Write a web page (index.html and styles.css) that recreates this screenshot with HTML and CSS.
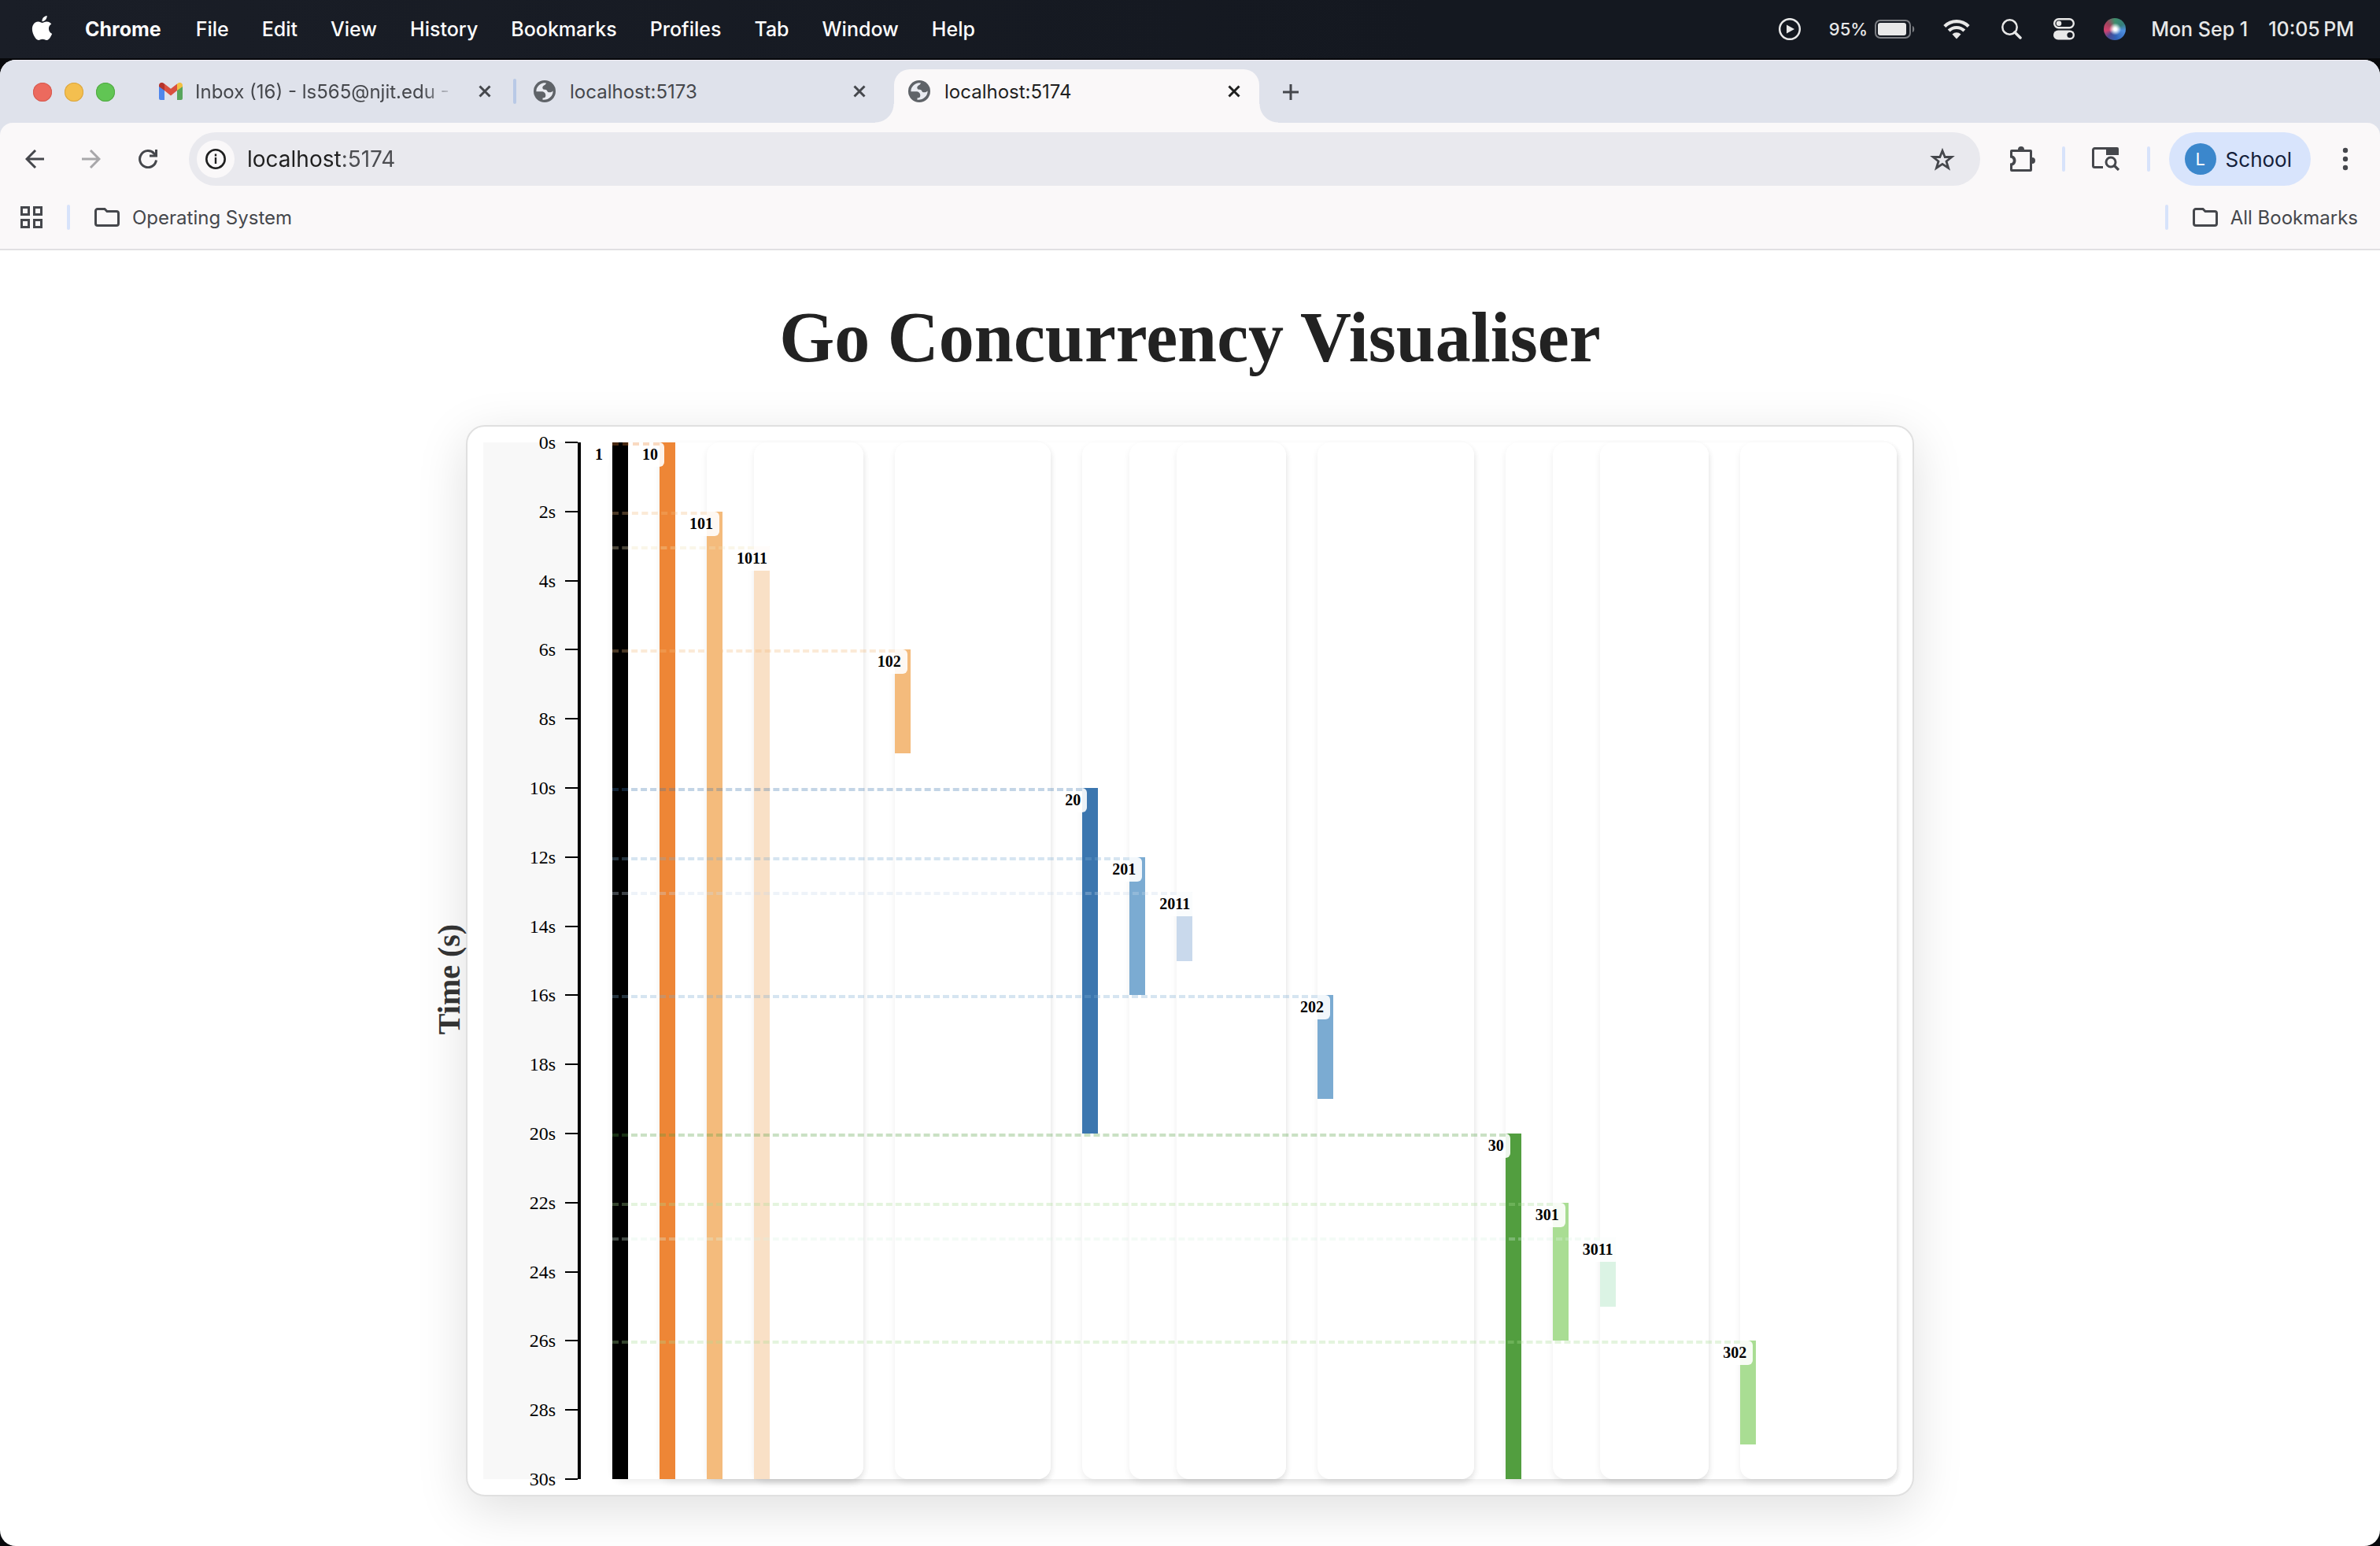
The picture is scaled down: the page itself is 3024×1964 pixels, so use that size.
FILE: index.html
```html
<!DOCTYPE html>
<html lang="en">
<head>
<meta charset="utf-8">
<title>Go Concurrency Visualiser</title>
<link rel="stylesheet" href="styles.css">
</head>
<body>
<svg class="defs" aria-hidden="true">
  <symbol id="globe" viewBox="0 0 28 28"><circle cx="14" cy="14" r="14" fill="#5f6368"/><path class="land" d="M3.4 13.4C3.6 8.500 8 4 13 3.300L16 3.400C15.800 5.800 11.500 6.500 11.300 9C11.200 11 12.500 11.800 14.500 11.800C17.500 11.800 17 14.800 19 15.200C21 15.600 23 15 24.600 13.400C24.800 19.500 19.500 25.200 11.500 24.700V22.500C14.500 22.500 15.300 21.500 15.300 19C15.300 16 13 14.300 10 14.300H3.400Z"/></symbol>
  <symbol id="cross" viewBox="0 0 16 16"><path d="M1.500 1.500l13 13M14.500 1.500l-13 13" fill="none" stroke="currentColor" stroke-width="3"/></symbol>
  <symbol id="folder" viewBox="0 0 32 24"><path d="M1.500 4V20a2.500 2.500 0 0 0 2.500 2.500H28a2.500 2.500 0 0 0 2.500-2.500V7a2.500 2.500 0 0 0-2.500-2.500H16L13 1.500H4A2.500 2.500 0 0 0 1.500 4Z" fill="none" stroke="currentColor" stroke-width="3"/></symbol>
</svg>

<header class="menubar">
  <nav class="menus" aria-label="Menu bar">
    <button class="menu apple" aria-label="Apple"><svg width="31" height="31" viewBox="0 0 24 24"><path fill="#fff" d="M12.152 6.896c-.948 0-2.415-1.078-3.96-1.040-2.040.027-3.910 1.183-4.961 3.014-2.117 3.675-.546 9.103 1.519 12.090 1.013 1.454 2.208 3.090 3.792 3.039 1.520-.065 2.090-.987 3.935-.987 1.831 0 2.350.987 3.960.948 1.637-.026 2.676-1.480 3.676-2.948 1.156-1.688 1.636-3.325 1.662-3.415-.039-.013-3.182-1.221-3.220-4.857-.026-3.040 2.480-4.494 2.597-4.559-1.429-2.090-3.623-2.324-4.390-2.376-2-.156-3.675 1.090-4.610 1.090zM15.530 3.830c.843-1.012 1.400-2.427 1.245-3.830-1.207.052-2.662.805-3.532 1.818-.780.896-1.454 2.338-1.273 3.714 1.338.104 2.715-.688 3.559-1.701"/></svg></button>
    <button class="menu app">Chrome</button>
    <button class="menu">File</button>
    <button class="menu">Edit</button>
    <button class="menu">View</button>
    <button class="menu">History</button>
    <button class="menu">Bookmarks</button>
    <button class="menu">Profiles</button>
    <button class="menu">Tab</button>
    <button class="menu">Window</button>
    <button class="menu">Help</button>
  </nav>
  <div class="status">
    <svg width="28" height="28" viewBox="0 0 28 28"><circle cx="14" cy="14" r="12.800" fill="none" stroke="#e8e8e8" stroke-width="2.500"/><path d="M10 8.500v11l10-5.500z" fill="#e8e8e8"/></svg>
    <div class="battery"><span class="percent">95%</span>
      <svg width="51" height="24" viewBox="0 0 51 24"><rect x="1" y="1" width="44" height="22" rx="6" fill="none" stroke="#7c7e83" stroke-width="2"/><rect x="4" y="4" width="36" height="16" rx="3" fill="#e8e8e8"/><path d="M48 8c3 1 3 7 0 8z" fill="#7c7e83"/></svg></div>
    <svg width="34" height="26" viewBox="0 0 34 26"><g fill="none" stroke="#e8e8e8" stroke-width="4.200"><path d="M1.800 9.500a21.500 21.500 0 0 1 30.400 0"/><path d="M7.200 15.100a13.800 13.800 0 0 1 19.600 0"/></g><path d="M11.500 19.500a7.800 7.800 0 0 1 11 0L17 25.500z" fill="#e8e8e8"/></svg>
    <svg width="26" height="26" viewBox="0 0 26 26"><circle cx="10.500" cy="10.500" r="9.200" fill="none" stroke="#e8e8e8" stroke-width="2.500"/><path d="M17 17l7 7" stroke="#e8e8e8" stroke-width="3.500" stroke-linecap="round"/></svg>
    <svg width="27" height="28" viewBox="0 0 27 28"><rect x="1.200" y="1.200" width="24.600" height="11" rx="5.500" fill="none" stroke="#e8e8e8" stroke-width="2.400"/><circle cx="7" cy="6.700" r="3.300" fill="#e8e8e8"/><rect y="15.500" width="27" height="12" rx="6" fill="#e8e8e8"/><circle cx="21" cy="21.500" r="3.600" fill="#141820"/></svg>
    <span class="siri" role="img" aria-label="Siri"></span>
    <time class="clock"><span>Mon Sep 1</span><span>10:05&#8239;PM</span></time>
  </div>
</header>

<div class="window">
  <div class="tabstrip">
    <div class="lights">
      <button class="light red" aria-label="Close"></button>
      <button class="light yellow" aria-label="Minimise"></button>
      <button class="light green" aria-label="Zoom"></button>
    </div>
    <div class="tabs">
      <div class="tab">
        <svg class="favicon mail" width="30" height="22" viewBox="0 0 30 22"><path d="M0 5h7v17H2a2 2 0 0 1-2-2z" fill="#4f86ec"/><path d="M23 5h7v15a2 2 0 0 1-2 2h-5z" fill="#58a55c"/><path d="M7 1.500l8 6.200 8-6.200v8.500l-8 6.500-8-6.500z" fill="#d95040"/><path d="M7 10L0 5V3.500C0 .5 3-1 5.500.4L7 1.500z" fill="#b5332c"/><path d="M23 10l7-5V3.500C30 .5 27-1 24.500.4L23 1.500z" fill="#f2bf42"/></svg>
        <span class="tab-title faded">Inbox (16) - ls565@njit.edu - N</span>
        <button class="close" aria-label="Close tab"><svg width="16" height="16"><use href="#cross"/></svg></button>
      </div>
      <span class="tab-sep"></span>
      <div class="tab">
        <svg class="favicon" width="28" height="28"><use href="#globe"/></svg>
        <span class="tab-title">localhost:5173</span>
        <button class="close" aria-label="Close tab"><svg width="16" height="16"><use href="#cross"/></svg></button>
      </div>
      <span class="tab-sep hidden"></span>
      <div class="tab active">
        <svg class="favicon" width="28" height="28"><use href="#globe"/></svg>
        <span class="tab-title">localhost:5174</span>
        <button class="close" aria-label="Close tab"><svg width="16" height="16"><use href="#cross"/></svg></button>
      </div>
    </div>
    <button class="newtab" aria-label="New tab"><svg width="20" height="20" viewBox="0 0 20 20"><path d="M10 0v20M0 10h20" stroke="#45474c" stroke-width="3"/></svg></button>
  </div>

  <div class="chrome">
    <div class="toolbar">
      <button class="tool" aria-label="Back"><svg width="24" height="24" viewBox="0 0 24 24"><path d="M24 12H2M13 1L2 12l11 11" fill="none" stroke="#45474c" stroke-width="3"/></svg></button>
      <button class="tool" aria-label="Forward" disabled><svg width="24" height="24" viewBox="0 0 24 24"><path d="M0 12h22M11 1l11 11-11 11" fill="none" stroke="#a8a7aa" stroke-width="3"/></svg></button>
      <button class="tool" aria-label="Reload"><svg width="24" height="24" viewBox="0 0 24 24"><path d="M22.500 13.500A10.500 10.500 0 1 1 20 5.200L22.300 8" fill="none" stroke="#45474c" stroke-width="3"/><path d="M14 9.500V6.500h7V0h3v9.500z" fill="#45474c"/></svg></button>
      <div class="omnibox">
        <button class="site-info" aria-label="Site information"><svg width="26" height="26" viewBox="0 0 26 26"><circle cx="13" cy="13" r="11.700" fill="none" stroke="#1f1f1f" stroke-width="2.600"/><path d="M13 11v8M13 6.500v3" stroke="#1f1f1f" stroke-width="2.400"/></svg></button>
        <input class="url" type="text" value="localhost:5174" aria-label="Address">
        <button class="star" aria-label="Bookmark this tab"><svg width="32" height="31" viewBox="0 0 32 31"><path d="M16 4.500l3.200 8h8.600l-6.800 5.400 2.600 8.600L16 21.400 8.400 26.500l2.600-8.600-6.800-5.400h8.600z" fill="none" stroke="#45474c" stroke-width="2.800"/></svg></button>
      </div>
      <button class="tool ext" aria-label="Extensions"><svg width="32" height="32" viewBox="0 0 32 32"><path d="M10 4a4 4 0 0 1 8 0h8a2 2 0 0 1 2 2v8a4 4 0 0 1 0 8v8a2 2 0 0 1-2 2H2a2 2 0 0 1-2-2v-8.500c5 0 5-7 0-7V6a2 2 0 0 1 2-2zM3 7v4.500c6 2 6 11 0 13V29h22V7z" fill="#45474c" fill-rule="evenodd"/></svg></button>
      <span class="sep"></span>
      <button class="tool" aria-label="Search tabs"><svg width="36" height="30" viewBox="0 0 36 30"><path d="M14 25.500H3.500A2 2 0 0 1 1.500 23.500V3.500A2 2 0 0 1 3.500 1.500H31" fill="none" stroke="#45474c" stroke-width="3"/><path d="M18 0h14a2 2 0 0 1 2 2v8H18z" fill="#45474c"/><circle cx="24" cy="19" r="6" fill="none" stroke="#45474c" stroke-width="3"/><path d="M28 23l6 6" stroke="#45474c" stroke-width="3.200"/></svg></button>
      <span class="sep"></span>
      <button class="profile"><span class="avatar">L</span>School</button>
      <button class="tool more" aria-label="More"><svg width="8" height="30" viewBox="0 0 8 30" fill="#45474c"><circle cx="4" cy="4" r="3.200"/><circle cx="4" cy="15" r="3.200"/><circle cx="4" cy="26" r="3.200"/></svg></button>
    </div>
    <div class="bookmarks">
      <button class="bookmark" aria-label="Apps"><svg width="28" height="28" viewBox="0 0 28 28"><g fill="none" stroke="#45474c" stroke-width="3"><rect x="1.500" y="1.500" width="9" height="9"/><rect x="17.500" y="1.500" width="9" height="9"/><rect x="1.500" y="17.500" width="9" height="9"/><rect x="17.500" y="17.500" width="9" height="9"/></g></svg></button>
      <span class="sep"></span>
      <button class="bookmark"><svg width="32" height="24"><use href="#folder"/></svg>Operating System</button>
      <span class="sep last"></span>
      <button class="bookmark"><svg width="32" height="24"><use href="#folder"/></svg>All Bookmarks</button>
    </div>
  </div>

  <main class="page">
    <h1 class="title">Go Concurrency Visualiser</h1>
    <section class="card">
      <span class="axis-title">Time (s)</span>
      <ol class="axis">
        <li>0s</li><li>2s</li><li>4s</li><li>6s</li><li>8s</li><li>10s</li><li>12s</li><li>14s</li>
        <li>16s</li><li>18s</li><li>20s</li><li>22s</li><li>24s</li><li>26s</li><li>28s</li><li>30s</li>
      </ol>
      <div class="plot">
        <div class="lane">
          <div class="track"><div class="bar c1" style="--start:0;--end:30"><span class="tag">1</span></div></div>
          <div class="lane">
            <div class="track"><div class="bar c10" style="--start:0;--end:30"><span class="tag">10</span></div></div>
            <div class="lane">
              <div class="track"><div class="bar c101" style="--start:2;--end:30"><span class="tag">101</span></div></div>
              <div class="lane">
                <div class="track"><div class="bar c1011" style="--start:3;--end:30"><span class="tag">1011</span></div></div>
              </div>
            </div>
            <div class="lane">
              <div class="track"><div class="bar c101" style="--start:6;--end:9"><span class="tag">102</span></div></div>
            </div>
          </div>
          <div class="lane">
            <div class="track"><div class="bar c20" style="--start:10;--end:20"><span class="tag">20</span></div></div>
            <div class="lane">
              <div class="track"><div class="bar c201" style="--start:12;--end:16"><span class="tag">201</span></div></div>
              <div class="lane">
                <div class="track"><div class="bar c2011" style="--start:13;--end:15"><span class="tag">2011</span></div></div>
              </div>
            </div>
            <div class="lane">
              <div class="track"><div class="bar c201" style="--start:16;--end:19"><span class="tag">202</span></div></div>
            </div>
          </div>
          <div class="lane">
            <div class="track"><div class="bar c30" style="--start:20;--end:30"><span class="tag">30</span></div></div>
            <div class="lane">
              <div class="track"><div class="bar c301" style="--start:22;--end:26"><span class="tag">301</span></div></div>
              <div class="lane">
                <div class="track"><div class="bar c3011" style="--start:23;--end:25"><span class="tag">3011</span></div></div>
              </div>
            </div>
            <div class="lane">
              <div class="track"><div class="bar c301" style="--start:26;--end:29"><span class="tag">302</span></div></div>
            </div>
          </div>
        </div>
        <div class="spawns">
          <i class="spawn s10" style="--start:0;width:3.676%"></i>
          <i class="spawn s101" style="--start:2;width:7.353%"></i>
          <i class="spawn s1011" style="--start:3;width:11.029%"></i>
          <i class="spawn s101" style="--start:6;width:21.977%"></i>
          <i class="spawn s20" style="--start:10;width:36.601%"></i>
          <i class="spawn s201" style="--start:12;width:40.278%"></i>
          <i class="spawn s2011" style="--start:13;width:43.954%"></i>
          <i class="spawn s201" style="--start:16;width:54.902%"></i>
          <i class="spawn s30" style="--start:20;width:69.526%"></i>
          <i class="spawn s301" style="--start:22;width:73.203%"></i>
          <i class="spawn s3011" style="--start:23;width:76.879%"></i>
          <i class="spawn s301" style="--start:26;width:87.827%"></i>
        </div>
      </div>
    </section>
  </main>
</div>
</body>
</html>
```
FILE: styles.css
```css
* { box-sizing: border-box; }

body {
  margin: 0;
  min-height: 100vh;
  display: flex;
  flex-direction: column;
  background: #08090c;
  font-family: Inter, "Liberation Sans", sans-serif;
}

button {
  border: 0;
  padding: 0;
  background: none;
  font: inherit;
  color: inherit;
  display: flex;
  align-items: center;
}

.defs { display: none; }

/* System menu bar */
.menubar {
  height: 74px;
  margin-bottom: 2px;
  display: flex;
  align-items: center;
  justify-content: space-between;
  background: linear-gradient(90deg, #1a1e27, #141820 60%);
  color: #fff;
  font-size: 25px;
  font-weight: 500;
}
.menus { display: flex; gap: 42px; padding-left: 38px; }
.apple { margin-right: -3px; padding-bottom: 3px; }
.app { margin-right: 2px; font-weight: 700; }
.status { display: flex; align-items: center; padding-right: 33px; gap: 40px; color: #e8e8e8; }
.battery { display: flex; align-items: center; gap: 9px; margin: 0 -4px; }
.percent { font-size: 22px; }
.siri {
  width: 28px;
  height: 28px;
  margin-left: -3px;
  border-radius: 50%;
  background:
    radial-gradient(circle at 52% 50%, #fff 0 8%, rgba(255, 255, 255, .7) 18%, transparent 38%),
    conic-gradient(from 0deg, #3f8e6c, #357f7c 60deg, #4f8fe0 100deg, #2f62b8 170deg, #4b4a93 220deg, #d2426f 260deg, #a0445c 310deg, #3f8e6c);
}
.clock { display: flex; gap: 26px; margin-left: -8px; }

/* Browser window */
.window {
  flex: 1;
  display: flex;
  flex-direction: column;
  overflow: hidden;
  border-radius: 20px;
  background: #fff;
}
.tabstrip {
  height: 80px;
  display: flex;
  background: #dfe2eb;
  border-top: 1px solid #f2eff6;
}
.lights { display: flex; gap: 16px; align-items: center; padding-left: 42px; width: 184px; }
.light { width: 24px; height: 24px; border-radius: 50%; }
.red { background: #ec6a5e; box-shadow: inset 0 0 0 1px #d55b50; }
.yellow { background: #f4bf4f; box-shadow: inset 0 0 0 1px #d9a53f; }
.green { background: #61c554; box-shadow: inset 0 0 0 1px #52a944; }
.tabs { display: flex; padding-top: 11px; }
.tab {
  width: 464px;
  display: flex;
  align-items: center;
  padding: 0 16px 12px 18px;
  color: #45474c;
  font-size: 24px;
}
.favicon { flex: none; margin-right: 18px; }
.mail { margin-right: 16px; }
.land { fill: #e9ebf1; }
.tab-title { flex: 1; white-space: nowrap; overflow: hidden; }
.faded {
  -webkit-mask-image: linear-gradient(90deg, #000 82%, transparent 94%);
  mask-image: linear-gradient(90deg, #000 82%, transparent 94%);
}
.close { width: 32px; height: 32px; justify-content: center; }
.tab-sep {
  width: 4px;
  height: 32px;
  margin: 12px 4px;
  border-radius: 2px;
  background: #b9c9e6;
}
.hidden { visibility: hidden; }
.active {
  position: relative;
  background: #faf8f9;
  border-radius: 20px 20px 0 0;
  color: #1f1f1f;
}
.active::before,
.active::after {
  content: "";
  position: absolute;
  bottom: 0;
  width: 24px;
  height: 24px;
}
.active::before { right: 100%; background: radial-gradient(circle at 0 0, transparent 23px, #faf8f9 24px); }
.active::after { left: 100%; background: radial-gradient(circle at 100% 0, transparent 23px, #faf8f9 24px); }
.newtab { width: 32px; height: 32px; margin: 24px; justify-content: center; }

.chrome {
  background: #faf8f9;
  border-bottom: 2px solid #e1e0e2;
  border-radius: 16px 16px 0 0;
  box-shadow: 0 -16px 0 0 #dfe2eb;
}
.tabstrip { position: relative; z-index: 1; }
.toolbar { display: flex; align-items: center; padding: 12px 20px 0; }
.tool { width: 48px; height: 48px; justify-content: center; margin-right: 24px; }
.tool.more { margin: 0 0 0 20px; }
.omnibox {
  flex: 1;
  height: 68px;
  display: flex;
  align-items: center;
  margin: 0 30px 0 4px;
  padding: 0 32px 0 10px;
  border-radius: 34px;
  background: #e9e9ee;
}
.site-info {
  width: 48px;
  height: 48px;
  justify-content: center;
  border-radius: 50%;
  background: #faf8f9;
}
.url {
  flex: 1;
  border: 0;
  padding: 0 0 0 16px;
  font: 28px Inter, "Liberation Sans", sans-serif;
  color: transparent;
  background: linear-gradient(90deg, #1f1f1f 138px, #4b4c50 138px);
  -webkit-background-clip: text;
  background-clip: text;
  outline: 0;
}
.ext { margin-right: 26px; }
.sep { width: 4px; height: 32px; border-radius: 2px; background: #d7e3fb; }
.toolbar .sep + .tool { margin: 0 28px 0 28px; }
.profile {
  height: 68px;
  margin-left: 24px;
  padding: 0 24px 0 20px;
  gap: 12px;
  border-radius: 34px;
  background: #d8e4fc;
  color: #14203a;
  font-size: 26px;
}
.avatar {
  width: 40px;
  height: 40px;
  display: flex;
  align-items: center;
  justify-content: center;
  border-radius: 50%;
  background: #3b87cc;
  color: #fff;
  font-size: 22px;
}
.bookmarks {
  height: 80px;
  display: flex;
  align-items: center;
  gap: 31px;
  padding: 0 28px 0 26px;
  color: #45474c;
  font-size: 24px;
}
.bookmark { gap: 16px; }
.bookmarks .last { margin-left: auto; }

/* Visualiser page */
.page {
  flex: 1;
  padding: 0 60px 60px;
  font-family: "Liberation Serif", serif;
}
.title {
  margin: 59px 0;
  color: #222;
  font-size: 90px;
  line-height: 104px;
  text-align: center;
}
.card {
  position: relative;
  display: flex;
  max-width: 1840px;
  margin: 0 auto;
  padding: 20px;
  border: 2px solid #e0e0e0;
  border-radius: 24px;
  background: #fff;
  box-shadow: 0 16px 64px rgba(0, 0, 0, .13);
}
.axis-title {
  position: absolute;
  top: 50%;
  left: -103px;
  width: 160px;
  color: #333;
  font-size: 40px;
  font-weight: 700;
  line-height: 46px;
  text-align: center;
  transform: rotate(-90deg);
}
.axis {
  width: 124px;
  margin: 0;
  padding: 0;
  display: flex;
  flex-direction: column;
  justify-content: space-between;
  list-style: none;
  background: #f8f8f8;
  border-right: 4px solid #000;
}
.axis li {
  display: flex;
  align-items: center;
  justify-content: flex-end;
  gap: 12px;
  height: 2px;
  margin: -1px 0;
  font-size: 24px;
  line-height: 2px;
}
.axis li::after { content: ""; width: 16px; height: 2px; background: #000; }
.plot {
  flex: 1;
  display: grid;
  margin-left: 40px;
  height: 1317px;
}
.plot > * { grid-area: 1 / 1; }
.lane {
  flex: 1 1 0;
  display: flex;
  gap: 40px;
  border-radius: 16px;
  background: #fff;
  box-shadow: 0 4px 8px rgba(0, 0, 0, .07);
}
.track,
.spawns {
  display: grid;
  grid-template-rows: repeat(30, minmax(0, 1fr));
}
.track { flex: none; width: 20px; }
.bar {
  position: relative;
  grid-row: calc(var(--start) + 1) / calc(var(--end) + 1);
}
.tag {
  position: absolute;
  top: 0;
  left: -30px;
  padding: 4px 8px;
  border-radius: 6px;
  background: rgba(255, 255, 255, .9);
  color: #000;
  font-size: 20px;
  font-weight: 700;
  line-height: 23px;
}
.spawns { position: relative; z-index: 1; }
.spawn {
  grid-row: calc(var(--start) + 1);
  border-top: 4px dashed;
  opacity: .3;
}
.c1 { background: #000; }
.c10 { background: #ee8636; }
.c101 { background: #f4bb7c; }
.c1011 { background: #f9e0c6; }
.c20 { background: #3b76af; }
.c201 { background: #7babd2; }
.c2011 { background: #c9d9ec; }
.c30 { background: #529e3f; }
.c301 { background: #a9dd93; }
.c3011 { background: #dbf3e4; }
.s10 { border-color: #ee8636; }
.s101 { border-color: #f4bb7c; }
.s1011 { border-color: #f1e2b9; }
.s20 { border-color: #3b76af; }
.s201 { border-color: #7babd2; }
.s2011 { border-color: #c9d9ec; }
.s30 { border-color: #529e3f; }
.s301 { border-color: #a9dd93; }
.s3011 { border-color: #dbf3e4; }
```
